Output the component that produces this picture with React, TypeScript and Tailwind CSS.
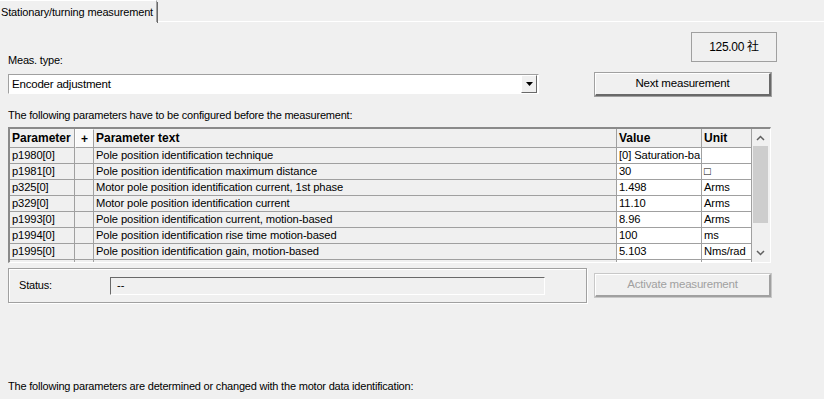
import React from "react";

const rows = [
  ["p1980[0]", "Pole position identification technique", "[0] Saturation-ba", ""],
  ["p1981[0]", "Pole position identification maximum distance", "30", "□"],
  ["p325[0]", "Motor pole position identification current, 1st phase", "1.498", "Arms"],
  ["p329[0]", "Motor pole position identification current", "11.10", "Arms"],
  ["p1993[0]", "Pole position identification current, motion-based", "8.96", "Arms"],
  ["p1994[0]", "Pole position identification rise time motion-based", "100", "ms"],
  ["p1995[0]", "Pole position identification gain, motion-based", "5.103", "Nms/rad"],
];

const cell = "border-r border-b border-[#a0a0a0] pl-[2px] h-[16px] leading-[15px] whitespace-nowrap overflow-hidden";
const hcell = "border-r border-b border-[#a0a0a0] pl-[2px] h-[19px] leading-[18px] whitespace-nowrap overflow-hidden text-[12px]";

export default function App() {
  return (
    <div
      className="w-[824px] h-[399px] bg-[#f0f0f0] overflow-hidden text-black text-[11px]"
      style={{ fontFamily: '"Liberation Sans", Arial, "Noto Sans CJK SC", sans-serif' }}
    >
      {/* tab strip */}
      <div className="flex h-[22px]">
        <div className="h-[22px] w-[157px] border-t border-t-white border-r border-r-[#a0a0a0] pl-[1px] pt-[4px] text-[11px] leading-[14px] whitespace-nowrap tracking-[-0.15px] relative">
          Stationary/turning measurement
          <div className="absolute right-[-2px] top-[1px] h-[21px] w-px bg-[#696969]" />
        </div>
        <div className="flex-1 border-b border-b-white" />
      </div>

      <div className="pl-[8px]">
        {/* top controls */}
        <div className="flex">
          <div className="w-[531px] pt-[31px]">
            <div className="h-[14px] leading-[14px] text-[11px] tracking-[-0.2px]">Meas. type:</div>
            <div className="mt-[7px] h-[20px] w-[531px] border-t border-l border-t-[#a0a0a0] border-l-[#a0a0a0] border-b border-r border-b-white border-r-white bg-white flex">
              <div className="flex-1 pl-[3px] leading-[18px] text-[11.5px] tracking-[-0.2px]">Encoder adjustment</div>
              <div className="w-[16px] h-[18px] bg-[#f0f0f0] border-r border-b border-r-[#696969] border-b-[#696969] border-t border-l border-t-white border-l-white flex items-center justify-center mr-[1px]">
                <svg width="7" height="4" viewBox="0 0 7 4"><path d="M0 0h7L3.5 4z" fill="#000" /></svg>
              </div>
            </div>
          </div>
          <div className="ml-[56px] w-[182px] flex flex-col">
            <div className="ml-auto mt-[10px] w-[86px] h-[30px] border border-[#a0a0a0] flex items-center justify-center text-[12px] tracking-[-0.3px]">
              125.00 社
            </div>
            <div className="mt-[11px] w-[176px] h-[23px] bg-[#f0f0f0] border-t border-l border-t-white border-l-white border-r-2 border-b-2 border-r-[#696969] border-b-[#696969] outline outline-1 outline-[#a0a0a0] flex items-center justify-center text-[11.5px] tracking-[-0.2px]">
              Next measurement
            </div>
          </div>
        </div>

        <div className="mt-[12px] h-[14px] leading-[14px] text-[11px] tracking-[-0.2px]">
          The following parameters have to be configured before the measurement:
        </div>

        {/* table */}
        <div className="mt-[5px] w-[763px] h-[136px] border-t-2 border-l-2 border-t-[#8a8a8a] border-l-[#8a8a8a] border-r border-b border-r-white border-b-white flex overflow-hidden">
          <div className="w-[742px]">
            <div className="grid grid-cols-[65px_19px_523px_85px_50px] font-bold">
              <div className={hcell}>Parameter</div>
              <div className="border-r border-b border-[#a0a0a0] h-[19px] bg-[#fafafa] border-t border-l border-t-white border-l-white flex items-center justify-center text-[12px]">+</div>
              <div className={hcell}>Parameter text</div>
              <div className={hcell}>Value</div>
              <div className={hcell}>Unit</div>
            </div>
            {rows.map((r, i) => (
              <div key={i} className="grid grid-cols-[65px_19px_523px_85px_50px] text-[11.2px] tracking-[-0.1px]">
                <div className={cell}>{r[0]}</div>
                <div className={cell}></div>
                <div className={cell}>{r[1]}</div>
                <div className={cell + " bg-white"}>{r[2]}</div>
                <div className={cell + " bg-white"}>{r[3]}</div>
              </div>
            ))}
            <div className="grid grid-cols-[65px_19px_523px_85px_50px]">
              <div className="border-r border-[#a0a0a0] h-[4px]" />
              <div className="border-r border-[#a0a0a0] h-[4px]" />
              <div className="border-r border-[#a0a0a0] h-[4px]" />
              <div className="border-r border-[#a0a0a0] h-[4px] bg-white" />
              <div className="border-r border-[#a0a0a0] h-[4px] bg-white" />
            </div>
          </div>
          {/* scrollbar */}
          <div className="w-[17px] h-full bg-[#f0f0f0] flex flex-col">
            <div className="h-[17px] flex items-center justify-center">
              <svg width="9" height="6" viewBox="0 0 9 6"><path d="M1 5L4.5 1.5 8 5" stroke="#606060" strokeWidth="1.5" fill="none" /></svg>
            </div>
            <div className="mx-[1px] h-[77px] bg-[#cdcdcd]" />
            <div className="flex-1" />
            <div className="h-[17px] flex items-center justify-center mb-[1px]">
              <svg width="9" height="6" viewBox="0 0 9 6"><path d="M1 1L4.5 4.5 8 1" stroke="#606060" strokeWidth="1.5" fill="none" /></svg>
            </div>
          </div>
        </div>

        {/* status */}
        <div className="mt-[5px] flex">
          <div className="w-[579px] h-[35px] border border-[#a0a0a0] shadow-[inset_1px_1px_0_#fff,1px_1px_0_#fff] flex items-center">
            <div className="w-[101px] pl-[10px] text-[11px] tracking-[-0.2px]">Status:</div>
            <div className="w-[435px] h-[18px] border-t border-l border-t-[#696969] border-l-[#696969] border-b border-r border-b-white border-r-white pl-[6px] leading-[15px] text-[11px]">
              --
            </div>
          </div>
          <div className="ml-[8px] mt-[6px] w-[176px] h-[23px] border-t border-l border-t-white border-l-white border-r-2 border-b-2 border-r-[#a0a0a0] border-b-[#a0a0a0] outline outline-1 outline-[#c8c8c8] flex items-center justify-center text-[11.5px] tracking-[-0.2px] text-[#a0a0a0]">
            Activate measurement
          </div>
        </div>

        <div className="mt-[76px] h-[14px] leading-[14px] text-[11px] tracking-[-0.2px]">
          The following parameters are determined or changed with the motor data identification:
        </div>
      </div>
    </div>
  );
}
